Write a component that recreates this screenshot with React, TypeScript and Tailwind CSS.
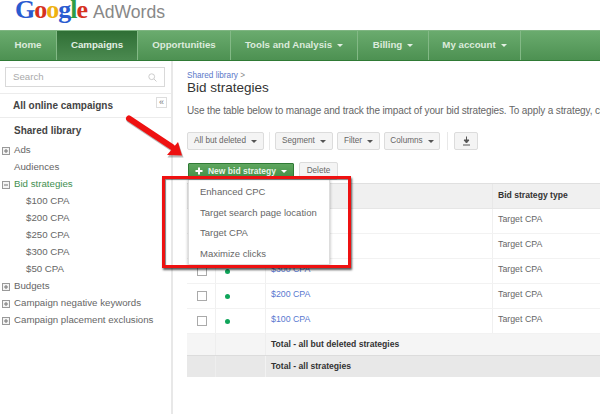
const Caret = ({ c = "border-t-[#555]" }: { c?: string }) => (
  <span className={`inline-block w-0 h-0 border-x-[3px] border-x-transparent border-t-[3px] ${c}`} />
);

const Tbtn = ({ w, label }: { w: string; label: string }) => (
  <div className={`${w} h-[18px] flex items-center justify-center gap-[5px] rounded-[2px] border border-[#dcdcdc] bg-[#f4f4f4] text-[8.2px] text-[#666] whitespace-nowrap`}>
    {label}
    <Caret />
  </div>
);

const Expander = ({ minus }: { minus?: boolean }) => (
  <svg width="8" height="8" viewBox="0 0 8 8" className="shrink-0">
    <rect x="0.5" y="0.5" width="7" height="7" fill="#f4f4f4" stroke="#999" />
    <path d={minus ? "M2 4h4" : "M2 4h4M4 2v4"} stroke="#777" />
  </svg>
);

const TreeRow = ({ label, exp, minus, green, indent }: { label: string; exp?: boolean; minus?: boolean; green?: boolean; indent?: boolean }) => (
  <div className={`h-[17px] flex items-center gap-[4px] ${indent ? "pl-[26px]" : exp ? "pl-[2px]" : "pl-[14px]"} ${green ? "text-[#3f8f50]" : "text-[#666]"}`}>
    {exp && <Expander minus={minus} />}
    <span className="whitespace-nowrap">{label}</span>
  </div>
);

const NavItem = ({ w, label, caret, active }: { w: string; label: string; caret?: boolean; active?: boolean }) => (
  <div
    className={`${w} h-full flex items-center justify-center gap-[5px] border-r border-[#83b986] whitespace-nowrap font-bold ${
      active ? "bg-gradient-to-b from-[#2f6f35] to-[#4b8a50] text-[#e4f0e4]" : "text-[#dcebdc]"
    }`}
  >
    {label}
    {caret && <Caret c="border-t-[#e4f0e4]" />}
  </div>
);

const rows = ["", "", "$300 CPA", "$200 CPA", "$100 CPA"];

export default function App() {
  return (
    <div className="relative w-[600px] h-[414px] overflow-hidden bg-white font-['Liberation_Sans',Arial,sans-serif] text-[9.7px] text-[#666]">
      {/* Header */}
      <div className="h-[30px] flex items-start pl-[15px]">
        <div className="font-['Liberation_Serif',serif] font-bold text-[26px] leading-[20px] tracking-[-1px]">
          <span className="text-[#2a5bd0]">G</span>
          <span className="text-[#d6321f]">o</span>
          <span className="text-[#eeb111]">o</span>
          <span className="text-[#2a5bd0]">g</span>
          <span className="text-[#2f9e44]">l</span>
          <span className="text-[#d6321f]">e</span>
        </div>
        <div className="ml-[6px] text-[17.6px] leading-[24px] text-[#888]">AdWords</div>
      </div>

      {/* Nav */}
      <div className="h-[31px] flex bg-gradient-to-b from-[#6aab6e] to-[#4d9152] border-t border-[#7fb582] border-b border-b-[#2f7a35] text-[9.7px]">
        <NavItem w="w-[57px]" label="Home" />
        <NavItem w="w-[81px]" label="Campaigns" active />
        <NavItem w="w-[93px]" label="Opportunities" />
        <NavItem w="w-[127px]" label="Tools and Analysis" caret />
        <NavItem w="w-[71px]" label="Billing" caret />
        <NavItem w="w-[92px]" label="My account" caret />
      </div>

      <div className="flex h-[353px]">
        {/* Sidebar */}
        <div className="relative w-[173px] shrink-0 border-r-2 border-[#e8e8e8]">
          <div className="px-[5px] pt-[6px]">
            <div className="h-[20px] w-[160px] flex items-center justify-between px-[7px] border border-[#d9d9d9] text-[#aaa]">
              Search
              <svg width="9" height="9" viewBox="0 0 9 9">
                <circle cx="3.7" cy="3.7" r="2.9" fill="none" stroke="#ccc" />
                <path d="M6 6l2.5 2.5" stroke="#ccc" />
              </svg>
            </div>
          </div>
          <div className="mt-[6px] h-[25px] flex items-center pl-[13px] border-y border-[#ececec] font-bold text-[#444] text-[10px]">
            All online campaigns
          </div>
          <div className="h-[4px]" />
          <div className="h-[17px] flex items-center pl-[14px] font-bold text-[#444] text-[10px]">Shared library</div>
          <div className="h-[3px]" />
          <TreeRow label="Ads" exp />
          <TreeRow label="Audiences" />
          <TreeRow label="Bid strategies" exp minus green />
          <TreeRow label="$100 CPA" indent />
          <TreeRow label="$200 CPA" indent />
          <TreeRow label="$250 CPA" indent />
          <TreeRow label="$300 CPA" indent />
          <TreeRow label="$50 CPA" indent />
          <TreeRow label="Budgets" exp />
          <TreeRow label="Campaign negative keywords" exp />
          <TreeRow label="Campaign placement exclusions" exp />

          <div className="absolute left-[156px] top-[36px] w-[11px] h-[11px] border border-[#ddd] bg-white flex items-center justify-center text-[9px] leading-none text-[#777]">
            «
          </div>
        </div>

        {/* Main */}
        <div className="flex-1 min-w-0 pl-[14px] overflow-hidden">
          <div className="pt-[9px] text-[8.2px] leading-[11px]">
            <span className="text-[#5a78c8]">Shared library</span>
            <span className="text-[#888]"> &gt;</span>
          </div>
          <div className="text-[13.5px] leading-[13px] text-[#333]">Bid strategies</div>
          <div className="mt-[10px] text-[10px] leading-[13px] whitespace-nowrap tracking-[-0.13px]">
            Use the table below to manage and track the impact of your bid strategies. To apply a strategy, click
          </div>

          <div className="mt-[15px] flex items-center">
            <Tbtn w="w-[77px]" label="All but deleted" />
            <div className="w-px h-[18px] bg-[#e8e8e8] ml-[5px] mr-[5px]" />
            <Tbtn w="w-[58px]" label="Segment" />
            <div className="w-[4px]" />
            <Tbtn w="w-[43px]" label="Filter" />
            <div className="w-[4px]" />
            <Tbtn w="w-[56px]" label="Columns" />
            <div className="w-px h-[18px] bg-[#e8e8e8] ml-[7px] mr-[6px]" />
            <div className="w-[24px] h-[18px] flex items-center justify-center rounded-[2px] border border-[#dcdcdc] bg-[#f4f4f4]">
              <svg width="9" height="10" viewBox="0 0 9 10">
                <path d="M4.5 0.5v5M2 4l2.5 3L7 4z" stroke="#555" fill="#555" />
                <path d="M1 9h7" stroke="#555" />
              </svg>
            </div>
          </div>

          <div className="mt-[12px] flex items-center gap-[5px] pl-px">
            <div className="w-[106px] h-[17px] flex items-center justify-center gap-[5px] rounded-[1px] border border-[#2f7a35] bg-gradient-to-b from-[#5fa65f] to-[#3f8f45] text-[8.5px] font-bold text-[#e8f3e8] whitespace-nowrap">
              <svg width="8" height="8" viewBox="0 0 8 8">
                <path d="M4 0.5v7M0.5 4h7" stroke="#fff" strokeWidth="2" />
              </svg>
              New bid strategy
              <Caret c="border-t-[#fff]" />
            </div>
            <div className="w-[39px] h-[18px] flex items-center justify-center rounded-[2px] border border-[#dcdcdc] bg-[#f4f4f4] text-[8.2px] text-[#666]">
              Delete
            </div>
          </div>

          {/* Table */}
          <div className="mt-[3px] w-[413px] text-[8.6px]">
            <div className="h-[26px] flex bg-[#f0f0f0] border-t border-[#e0e0e0] border-b border-b-[#e6e6e6]">
              <div className="w-[306px] shrink-0 border-r border-[#e8e8e8]" />
              <div className="pl-[5px] pb-[2px] flex items-center font-bold text-[#333]">Bid strategy type</div>
            </div>
            {rows.map((r, i) => (
              <div key={i} className="h-[25px] flex border-b border-[#f2f2f2]">
                <div className="w-[29px] shrink-0 flex items-center justify-center border-r border-[#f0f0f0]">
                  <div className="w-[10px] h-[10px] border border-[#aaa] bg-white ml-px" />
                </div>
                <div className="w-[50px] shrink-0 flex items-center border-r border-[#f0f0f0] pl-[9px]">
                  <div className="w-[5px] h-[5px] rounded-full bg-[#0fa55a] shrink-0" />
                </div>
                <div className="w-[227px] shrink-0 pl-[5px] pt-[4px] text-[8.8px] leading-[13px] text-[#5a78d0] border-r border-[#f0f0f0]">{r}</div>
                <div className="pl-[5px] pt-[4px] text-[#666] leading-[13px] text-[8.8px]">Target CPA</div>
              </div>
            ))}
            <div className="h-[22px] flex bg-[#f5f5f5] border-b border-[#dcdcdc] font-bold text-[#333]">
              <div className="w-[29px] border-r border-[#eee]" />
              <div className="w-[50px] border-r border-[#eee]" />
              <div className="pl-[5px] flex items-center">Total - all but deleted strategies</div>
            </div>
            <div className="h-[21px] flex bg-[#e8e8e8] font-bold text-[#333]">
              <div className="w-[29px] border-r border-[#eee]" />
              <div className="w-[50px] border-r border-[#f2f2f2]" />
              <div className="pl-[5px] flex items-center">Total - all strategies</div>
            </div>
          </div>
        </div>
      </div>

      {/* Dropdown menu */}
      <div className="absolute left-[188px] top-[179px] w-[142px] h-[86px] bg-white border border-[#ddd] shadow-[0_1px_3px_rgba(0,0,0,0.3)] py-[2px] text-[9.5px] text-[#666]">
        <div className="h-[21px] flex items-center pl-[11px]">Enhanced CPC</div>
        <div className="h-[20px] flex items-center pl-[11px] whitespace-nowrap">Target search page location</div>
        <div className="h-[21px] flex items-center pl-[11px]">Target CPA</div>
        <div className="h-[20px] flex items-center pl-[11px]">Maximize clicks</div>
      </div>

      {/* Red annotation box */}
      <div className="absolute left-[162px] top-[176px] w-[189px] h-[92px] border-[3px] border-[#ee1111] shadow-[1px_2px_2px_rgba(0,0,0,0.65),inset_1px_1px_1px_rgba(0,0,0,0.5)]" />

      {/* Red annotation arrow */}
      <svg className="absolute left-[120px] top-[110px]" width="70" height="52" viewBox="0 0 70 52">
        <path d="M9 8.5L52 37" stroke="#555" strokeWidth="6" strokeLinecap="round" opacity="0.4" transform="translate(0.5 1.5)" />
        <path d="M47 46.5L63 46.5L58 32z" fill="#555" opacity="0.4" transform="translate(0.5 1)" />
        <path d="M9 8.5L52 37" stroke="#ee1111" strokeWidth="6" strokeLinecap="round" />
        <path d="M47 45L62 45.5L58 32z" fill="#ee1111" />
      </svg>
    </div>
  );
}
